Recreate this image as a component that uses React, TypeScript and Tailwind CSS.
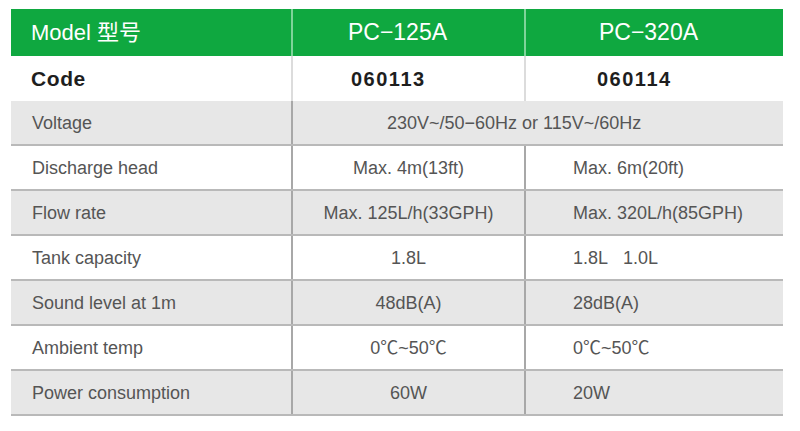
import React from "react";

const font = { fontFamily: '"Liberation Sans", Arial, "Noto Sans CJK SC", sans-serif' };

type Row = { label: string; a: string; b?: string; gray: boolean; span?: boolean };

const rows: Row[] = [
  { label: "Voltage", a: "230V~/50−60Hz or 115V~/60Hz", gray: true, span: true },
  { label: "Discharge head", a: "Max. 4m(13ft)", b: "Max. 6m(20ft)", gray: false },
  { label: "Flow rate", a: "Max. 125L/h(33GPH)", b: "Max. 320L/h(85GPH)", gray: true },
  { label: "Tank capacity", a: "1.8L", b: "1.8L\u00a0\u00a0\u00a01.0L", gray: false },
  { label: "Sound level at 1m", a: "48dB(A)", b: "28dB(A)", gray: true },
  { label: "Ambient temp", a: "0℃~50℃", b: "0℃~50℃", gray: false },
  { label: "Power consumption", a: "60W", b: "20W", gray: true },
];

export default function App() {
  return (
    <div className="w-[800px] h-[431px] bg-white" style={font}>
      <div className="pt-[9px] pl-[11px]">
        <div className="w-[772px] flex flex-col">
          {/* header */}
          <div className="grid grid-cols-[280px_233px_259px] h-[47px] bg-[#0fa840] text-white text-[22px]">
            <div className="flex items-center pl-[20px]">Model 型号</div>
            <div className="flex items-center justify-center pr-[22px] border-l-2 border-[#7fd49a] text-[23px]">PC−125A</div>
            <div className="flex items-center justify-center pr-[12px] border-l-2 border-[#7fd49a] text-[23px]">PC−320A</div>
          </div>
          {/* code */}
          <div className="grid grid-cols-[280px_233px_259px] h-[45px] bg-white text-[#1e1e1e] font-bold">
            <div className="flex items-center pl-[20px] text-[21px] tracking-[0.6px]">Code</div>
            <div className="flex items-center pl-[58px] border-l-2 border-[#dcdcdc] text-[20px] tracking-[1.5px]">060113</div>
            <div className="flex items-center pl-[71px] border-l-2 border-[#dcdcdc] text-[20px] tracking-[1.5px]">060114</div>
          </div>
          {rows.map((r) => (
            <div
              key={r.label}
              className={`grid grid-cols-[280px_233px_259px] h-[45px] border-b-2 border-[#b9b9b9] text-[18px] text-[#555555] ${r.gray ? "bg-[#e7e7e7]" : "bg-white"}`}
            >
              <div className="flex items-center pl-[21px] pt-[1px]">{r.label}</div>
              {r.span ? (
                <div className="col-span-2 flex items-center pl-[94px] pt-[1px] border-l-2 border-[#a8a8a8]">{r.a}</div>
              ) : (
                <>
                  <div className="flex items-center justify-center pt-[1px] border-l-2 border-[#a8a8a8]">{r.a}</div>
                  <div className="flex items-center pl-[47px] pt-[1px] border-l-2 border-[#a8a8a8]">{r.b}</div>
                </>
              )}
            </div>
          ))}
        </div>
      </div>
    </div>
  );
}
